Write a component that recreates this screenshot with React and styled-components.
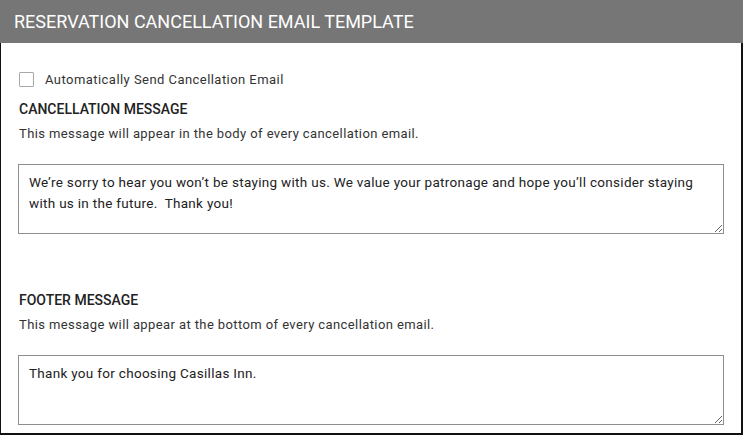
import styled, { createGlobalStyle } from 'styled-components'

const GlobalStyle = createGlobalStyle`
  html, body {
    margin: 0;
    padding: 0;
    background: #ffffff;
  }
  body {
    font-family: Roboto, "Liberation Sans", Arial, sans-serif;
  }
`

const Panel = styled.div`
  width: 743px;
  height: 435px;
  box-sizing: border-box;
  display: flex;
  flex-direction: column;
  overflow: hidden;
`

const Header = styled.div`
  height: 43px;
  flex-shrink: 0;
  background-color: #767676;
  color: #ffffff;
  display: flex;
  align-items: center;
  padding-left: 14px;
  font-size: 18px;
`

const Body = styled.div`
  flex: 1;
  border-left: 1px solid #111;
  border-right: 2px solid #111;
  border-bottom: 2px solid #111;
  padding: 29px 17px 0 17px;
  display: flex;
  flex-direction: column;
`

const CheckRow = styled.label`
  display: flex;
  align-items: center;
  gap: 11px;
  font-size: 13px;
  letter-spacing: 0.45px;
  color: #333;
  margin-left: 1px;
  cursor: pointer;
`

const Box = styled.input`
  appearance: none;
  width: 15px;
  height: 15px;
  margin: 0;
  border: 1px solid #a8a8a8;
  border-radius: 1px;
  background: #fff;
`

const Section = styled.section`
  margin-top: ${p => p.$top}px;
  display: flex;
  flex-direction: column;
`

const Label = styled.h4`
  margin: 0 0 0 1px;
  font-size: 14px;
  font-weight: 500;
  color: #222;
  line-height: 16px;
`

const Hint = styled.p`
  margin: 9px 0 0 1px;
  font-size: 13px;
  letter-spacing: 0.4px;
  color: #333;
  line-height: 15px;
`

const Message = styled.textarea`
  margin-top: 23px;
  width: 100%;
  height: 70px;
  box-sizing: border-box;
  border: 1px solid #8e8e8e;
  padding: 7px 10px;
  font-family: Roboto, "Liberation Sans", Arial, sans-serif;
  font-size: 13.5px;
  letter-spacing: 0.3px;
  line-height: 21px;
  color: #222;
  outline: none;
  display: block;
`

export default function App() {
  return (
    <>
      <GlobalStyle />
      <Panel>
        <Header>RESERVATION CANCELLATION EMAIL TEMPLATE</Header>
        <Body>
          <CheckRow>
            <Box type="checkbox" />
            Automatically Send Cancellation Email
          </CheckRow>

          <Section $top={14}>
            <Label>CANCELLATION MESSAGE</Label>
            <Hint>This message will appear in the body of every cancellation email.</Hint>
            <Message defaultValue={'We\u2019re sorry to hear you won\u2019t be staying with us. We value your patronage and hope you\u2019ll consider staying with us in the future.  Thank you!'} />
          </Section>

          <Section $top={58}>
            <Label>FOOTER MESSAGE</Label>
            <Hint>This message will appear at the bottom of every cancellation email.</Hint>
            <Message defaultValue="Thank you for choosing Casillas Inn." />
          </Section>
        </Body>
      </Panel>
    </>
  )
}
